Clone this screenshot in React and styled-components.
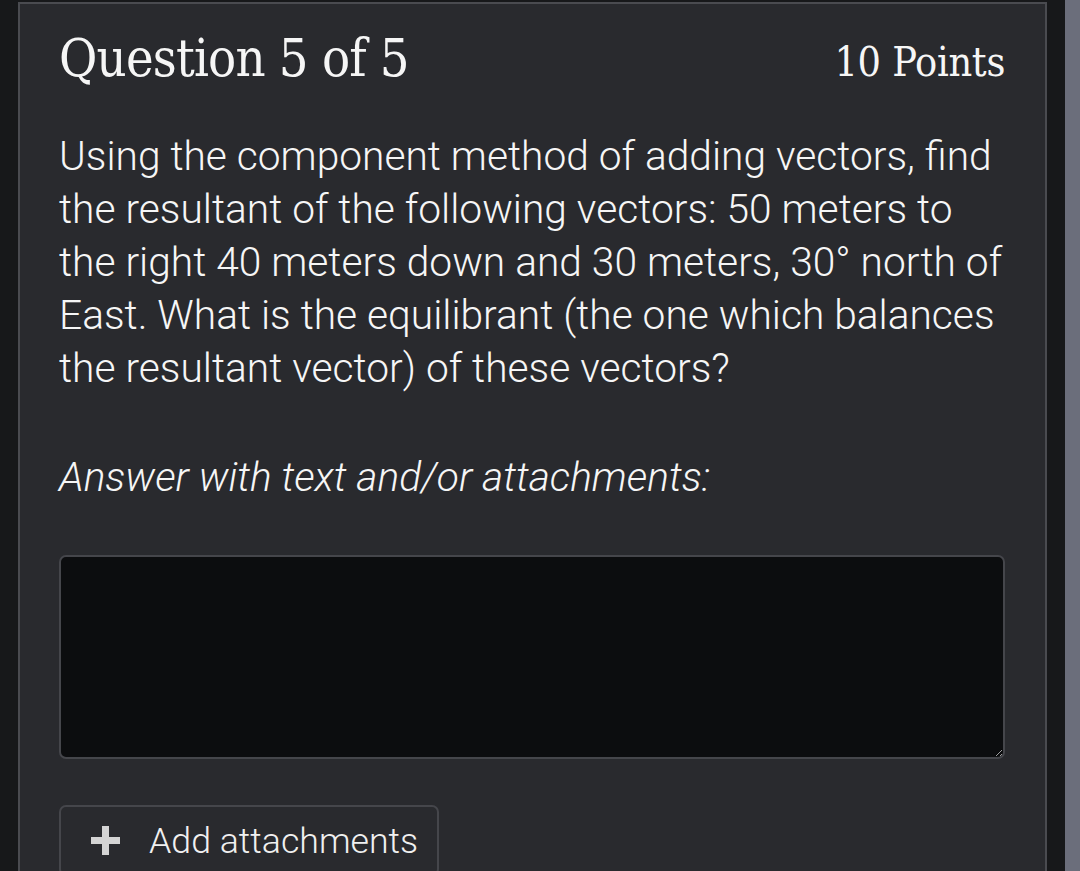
import React from "react";
import styled, { createGlobalStyle } from "styled-components";

const GlobalStyle = createGlobalStyle`
  html, body {
    margin: 0;
    padding: 0;
    background: #17181a;
    overflow: hidden;
  }
`;

const Page = styled.div`
  display: flex;
  height: 871px;
  overflow: hidden;
`;

const Gutter = styled.div`
  flex: 0 0 ${(p) => p.width}px;
  background: ${(p) => p.color || "#17181a"};
`;

const Card = styled.div`
  flex: 0 0 1029px;
  box-sizing: border-box;
  margin-top: 2px;
  background: #292a2e;
  border: 2px solid #4a4b50;
  border-bottom: none;
  padding: 22px 40px 0 39px;
  color: #f6f6f6;
`;

const Header = styled.div`
  display: flex;
  justify-content: space-between;
  align-items: baseline;
  font-family: "DejaVu Serif", serif;
  font-stretch: condensed;
  .title {
    font-size: 52px;
    letter-spacing: -0.8px;
    line-height: 64px;
  }
  .points {
    font-size: 41px;
    letter-spacing: -0.3px;
  }
`;

const Prompt = styled.p`
  margin: 40px 0 0;
  font-family: Roboto, sans-serif;
  font-weight: 300;
  font-size: 40.7px;
  line-height: 53px;
`;

const AnswerLabel = styled.p`
  margin: 56px 0 0;
  font-family: Roboto, sans-serif;
  font-weight: 300;
  font-style: italic;
  font-size: 40.7px;
  line-height: 53px;
`;

const AnswerBox = styled.textarea`
  display: block;
  box-sizing: border-box;
  width: 100%;
  height: 204px;
  margin-top: 51px;
  background: #0c0d0f;
  border: 2px solid #45464b;
  border-radius: 7px;
  color: #f4f4f4;
  font-family: Roboto, sans-serif;
  font-size: 30px;
  outline: none;
`;

const AttachButton = styled.button`
  display: flex;
  align-items: center;
  gap: 29px;
  box-sizing: border-box;
  margin-top: 46px;
  width: 380px;
  height: 71px;
  padding: 0 0 0 30px;
  background: transparent;
  border: 2px solid #45464b;
  border-radius: 7px;
  color: #f0f0f0;
  font-family: Roboto, sans-serif;
  font-weight: 300;
  font-size: 35.7px;
  cursor: pointer;
`;

const PlusIcon = () => (
  <svg width="29" height="29" viewBox="0 0 29 29">
    <path d="M11 0h7v11h11v7H18v11h-7V18H0v-7h11z" fill="#d4d4d4" />
  </svg>
);

export default function App() {
  return (
    <>
      <GlobalStyle />
      <Page>
        <Gutter width={18} />
        <Card>
          <Header>
            <span className="title">Question 5 of 5</span>
            <span className="points">10 Points</span>
          </Header>
          <Prompt>
            Using the component method of adding vectors, find the resultant
            of the following vectors: 50 meters to the right 40 meters down
            and 30 meters, 30° north of East. What is the equilibrant (the one
            which balances the resultant vector) of these vectors?
          </Prompt>
          <AnswerLabel>Answer with text and/or attachments:</AnswerLabel>
          <AnswerBox />
          <AttachButton>
            <PlusIcon />
            Add attachments
          </AttachButton>
        </Card>
        <Gutter width={18} />
        <Gutter width={15} color="#6b6e7b" />
      </Page>
    </>
  );
}
